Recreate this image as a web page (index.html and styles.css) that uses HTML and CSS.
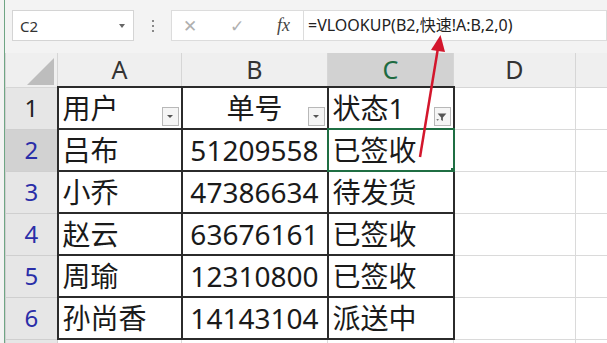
FILE: index.html
```html
<!DOCTYPE html>
<html lang="zh-CN">
<head>
    <meta charset="UTF-8">
    <meta name="viewport" content="width=device-width, initial-scale=1.0">
    <title>VLOOKUP 快速</title>
    <link rel="stylesheet" href="styles.css">
</head>
<body>
    <div class="app">
        <div class="formula-bar">
            <div class="name-box">
                <span class="cell-ref">C2</span>
                <span class="caret"></span>
            </div>
            <div class="grip"><i></i><i></i><i></i></div>
            <div class="fx-tools">
                <span class="tool">&#x2715;</span>
                <span class="tool">&#x2713;</span>
                <span class="fx">fx</span>
            </div>
            <div class="formula">=VLOOKUP(B2,快速!A:B,2,0)</div>
        </div>

        <table class="sheet">
            <colgroup>
                <col class="col-rh">
                <col class="col-a">
                <col class="col-b">
                <col class="col-c">
                <col class="col-d">
                <col class="col-e">
            </colgroup>
            <tr class="col-head">
                <th class="corner"><span class="tri"></span></th>
                <th>A</th>
                <th>B</th>
                <th class="sel">C</th>
                <th>D</th>
                <th></th>
            </tr>
            <tr>
                <th class="rh plain">1</th>
                <td class="t">用户<span class="flt"></span></td>
                <td class="t center">单号<span class="flt"></span></td>
                <td class="t">状态1<span class="flt on"><svg viewBox="0 0 16 16" width="14" height="14"><path d="M3 4h10l-4 4.5v4l-2-1.2V8.5z" fill="#555"/><path d="M1.5 10.5l1.5 1.8 1.5-1.8z" fill="#555"/></svg></span></td>
                <td></td>
                <td></td>
            </tr>
            <tr>
                <th class="rh sel">2</th>
                <td class="t">吕布</td>
                <td class="t num">51209558</td>
                <td class="t active">已签收</td>
                <td></td>
                <td></td>
            </tr>
            <tr>
                <th class="rh">3</th>
                <td class="t">小乔</td>
                <td class="t num">47386634</td>
                <td class="t">待发货</td>
                <td></td>
                <td></td>
            </tr>
            <tr>
                <th class="rh">4</th>
                <td class="t">赵云</td>
                <td class="t num">63676161</td>
                <td class="t">已签收</td>
                <td></td>
                <td></td>
            </tr>
            <tr>
                <th class="rh">5</th>
                <td class="t">周瑜</td>
                <td class="t num">12310800</td>
                <td class="t">已签收</td>
                <td></td>
                <td></td>
            </tr>
            <tr>
                <th class="rh">6</th>
                <td class="t">孙尚香</td>
                <td class="t num">14143104</td>
                <td class="t">派送中</td>
                <td></td>
                <td></td>
            </tr>
            <tr>
                <th class="rh"></th>
                <td></td>
                <td></td>
                <td></td>
                <td></td>
                <td></td>
            </tr>
        </table>
    </div>

    <!-- 红色箭头指向公式 -->
    <svg class="arrow" width="607" height="343" viewBox="0 0 607 343">
        <line x1="420" y1="157" x2="438" y2="48" stroke="#d3162c" stroke-width="2.5"/>
        <polygon points="440.5,35 431,50 445,52" fill="#d3162c"/>
    </svg>
</body>
</html>
```

FILE: styles.css
```css
body {
    margin: 0;
    background-color: #f3f3f3;
    font-family: "Noto Sans", "Noto Sans CJK SC", sans-serif;
    position: relative;
    width: 607px;
    height: 343px;
    overflow: hidden;
}
.app {
    margin-left: 4px;
    border-left: 1px solid #6fa584;
    height: 343px;
    overflow: hidden;
    background-color: #fff;
}
.formula-bar {
    height: 53px;
    box-sizing: border-box;
    padding-top: 10px;
    background-color: #f3f3f3;
    display: flex;
    align-items: flex-start;
}
.name-box {
    margin-left: 7px;
    width: 122px;
    height: 31px;
    box-sizing: border-box;
    border: 1px solid #d4d4d4;
    background-color: #fff;
    display: flex;
    align-items: center;
    justify-content: space-between;
    padding: 0 8px 0 7px;
}
.cell-ref {
    font-size: 15px;
    color: #333;
}
.caret {
    width: 0;
    height: 0;
    border-left: 3px solid transparent;
    border-right: 3px solid transparent;
    border-top: 4px solid #666;
}
.grip {
    width: 37px;
    height: 31px;
    display: flex;
    flex-direction: column;
    align-items: center;
    justify-content: center;
    gap: 3px;
}
.grip i {
    width: 2px;
    height: 2px;
    background-color: #888;
}
.fx-tools {
    width: 132px;
    height: 31px;
    box-sizing: border-box;
    border: 1px solid #dcdcdc;
    border-right: none;
    background-color: #fff;
    display: flex;
    align-items: center;
    padding-left: 11px;
}
.tool {
    width: 47px;
    font-size: 17px;
    color: #b0b0b0;
    font-family: "DejaVu Sans", sans-serif;
}
.fx {
    font-family: "Liberation Serif", serif;
    font-style: italic;
    font-size: 18px;
    color: #444;
}
.formula {
    flex: 1;
    height: 31px;
    box-sizing: border-box;
    border: 1px solid #dcdcdc;
    background-color: #fff;
    padding-left: 4px;
    font-size: 16px;
    line-height: 29px;
    color: #222;
    white-space: nowrap;
}
.sheet {
    border-collapse: collapse;
    table-layout: fixed;
    width: 640px;
}
.col-rh { width: 52px; }
.col-a { width: 124px; }
.col-b { width: 146px; }
.col-c { width: 126px; }
.col-d { width: 122px; }
.col-e { width: 70px; }
.sheet th, .sheet td {
    padding: 0 4px;
    border: 1px solid #dadada;
    line-height: 1;
    white-space: nowrap;
    overflow: hidden;
}
.sheet tr {
    height: 42px;
}
.sheet tr.col-head {
    height: 34px;
}
.col-head th {
    background-color: #efefef;
    border-color: #d6d6d6;
    font-weight: normal;
    font-size: 25px;
    color: #333;
    text-align: center;
    border-top: none;
}
.col-head th.sel {
    background-color: #d2d2d2;
    color: #1e6b41;
}
.corner {
    position: relative;
}
.tri {
    position: absolute;
    right: 3px;
    bottom: 2px;
    width: 0;
    height: 0;
    border-left: 27px solid transparent;
    border-bottom: 27px solid #bdbdbd;
}
.sheet .rh {
    background-color: #e6e6e6;
    border-color: #cfcfcf;
    font-weight: normal;
    font-size: 24px;
    color: #2a2ea8;
    text-align: center;
    padding: 0;
}
.sheet .rh.plain {
    color: #222;
}
.sheet .rh.sel {
    background-color: #d2d2d2;
}
.sheet td {
    font-size: 28px;
    color: #1a1a1a;
    vertical-align: middle;
}
.sheet td.t {
    border: 2px solid #2b2b2b;
    position: relative;
}
.sheet td.center {
    text-align: center;
}
.sheet td.num {
    text-align: right;
    padding-right: 8px;
}
.sheet td.active {
    outline: 2px solid #1f6e43;
    outline-offset: -1px;
}
.sheet td.active::after {
    content: "";
    position: absolute;
    right: -4px;
    bottom: -4px;
    width: 5px;
    height: 5px;
    background-color: #1f6e43;
    border: 1px solid #fff;
}
.flt {
    position: absolute;
    right: 2px;
    bottom: 2px;
    width: 17px;
    height: 19px;
    box-sizing: border-box;
    border: 1px solid #b8b8b8;
    background-color: #f5f5f5;
    display: flex;
    align-items: center;
    justify-content: center;
}
.flt::before {
    content: "";
    width: 0;
    height: 0;
    border-left: 3px solid transparent;
    border-right: 3px solid transparent;
    border-top: 3px solid #555;
}
.flt.on::before {
    display: none;
}
.arrow {
    position: absolute;
    top: 0;
    left: 0;
    pointer-events: none;
}
```
